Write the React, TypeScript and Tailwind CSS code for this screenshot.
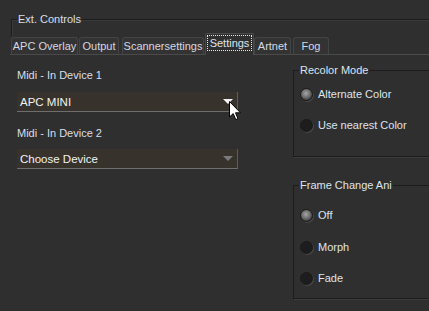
import type { ReactNode } from 'react';

const tabs = [
  { label: 'APC Overlay', cls: 'w-[67px]' },
  { label: 'Output', cls: 'ml-[1px] w-[40px]' },
  { label: 'Scannersettings', cls: 'ml-[3px] w-[82px]' },
  { label: 'Settings', cls: 'ml-[1px] w-[49px]', active: true },
  { label: 'Artnet', cls: 'w-[37px]' },
  { label: 'Fog', cls: 'ml-[2px] w-[36px]' },
];

function Tab({ label, cls, active }: { label: string; cls: string; active?: boolean }) {
  if (active) {
    return (
      <div
        className={`${cls} relative z-10 mb-[-1px] flex h-[22px] shrink-0 items-start justify-center rounded-t-[2px] border border-b-0 border-[#4a4a4a] bg-[#2f2f2f] pt-[1px]`}
      >
        <span className="border border-dotted border-[#e8e8e8] px-[2px] leading-[14px] text-[#dfe4ea]">
          {label}
        </span>
      </div>
    );
  }
  return (
    <div
      className={`${cls} flex h-[17px] shrink-0 items-center justify-center rounded-t-[3px] border border-b-0 border-[#444] bg-[#333] leading-[14px] text-[#d3d9e2]`}
    >
      {label}
    </div>
  );
}

function Dropdown({ value, hot }: { value: string; hot?: boolean }) {
  return (
    <div className="flex h-[20px] w-[221px] items-center justify-between border-r border-b border-r-[#5c5c5c] border-b-[#6e6e6e] bg-[#37322b] pl-[3px] pr-[4px]">
      <span className="text-[11.5px] leading-[14px] text-[#f2f2f2]">{value}</span>
      <svg width="10" height="5" viewBox="0 0 10 5">
        <polygon points="0,0 10,0 5,5" fill={hot ? '#f4f4f4' : '#7a7a7a'} />
      </svg>
    </div>
  );
}

function Radio({ label, checked }: { label: string; checked?: boolean }) {
  return (
    <div className="flex h-[20px] items-center">
      <div
        className={
          checked
            ? 'ml-[6px] size-[13px] rounded-full border border-[#1b1b1b] bg-[radial-gradient(circle_at_45%_40%,#a6a6a6_0%,#6e6e6e_45%,#3e3e3e_75%)] shadow-[1px_1px_0_#484848]'
            : 'ml-[6px] size-[13px] rounded-full border border-[#1a1a1a] bg-[#1d1d1d] shadow-[1px_1px_0_#454545]'
        }
      />
      <span className="ml-[5px] leading-[14px] text-[#dde4ee]">{label}</span>
    </div>
  );
}

function Group({ title, className, children }: { title: string; className: string; children: ReactNode }) {
  return (
    <fieldset className={`${className} w-[160px] border border-[#1c1c1c] shadow-[1px_1px_0_#3c3c3c]`}>
      <legend className="ml-[5px] px-[1px] leading-[14px] text-[#dde4ee]">{title}</legend>
      {children}
    </fieldset>
  );
}

export default function App() {
  return (
    <div
      className="relative h-[311px] w-[429px] overflow-hidden bg-[#2f2f2f] text-[11px]"
      style={{ fontFamily: '"Liberation Sans", Arial, sans-serif' }}
    >
      <fieldset className="ml-[11px] mt-[12px] h-[24px] w-[440px] border-t border-l border-[#1c1c1c] shadow-[inset_1px_1px_0_#3a3a3a]">
        <legend className="ml-[5px] px-[1px] leading-[14px] text-[#d8dfe9]">Ext. Controls</legend>
      </fieldset>

      <div className="ml-[10px] flex h-[19px] items-end border-b border-[#4a4a4a] pl-[1px]">
        {tabs.map((t) => (
          <Tab key={t.label} {...t} />
        ))}
      </div>

      <div className="flex">
        <div className="ml-[17px] flex w-[221px] shrink-0 flex-col">
          <div className="mt-[13px] leading-[14px] text-[#d8dfe9]">Midi - In Device 1</div>
          <div className="mt-[10px]">
            <Dropdown value="APC MINI" hot />
          </div>
          <div className="mt-[14px] leading-[14px] text-[#d8dfe9]">Midi - In Device 2</div>
          <div className="mt-[9px]">
            <Dropdown value="Choose Device" />
          </div>
        </div>

        <div className="ml-[55px] flex shrink-0 flex-col">
          <Group title="Recolor Mode" className="mt-[8px] h-[94px]">
            <div className="mt-[7px]">
              <Radio label="Alternate Color" checked />
            </div>
            <div className="mt-[11px]">
              <Radio label="Use nearest Color" />
            </div>
          </Group>
          <Group title="Frame Change Ani" className="mt-[21px] h-[121px]">
            <div className="mt-[13px]">
              <Radio label="Off" checked />
            </div>
            <div className="mt-[12px]">
              <Radio label="Morph" />
            </div>
            <div className="mt-[11px]">
              <Radio label="Fade" />
            </div>
          </Group>
        </div>
      </div>

      <svg className="absolute left-[229px] top-[101px]" width="13" height="20" viewBox="0 0 13 20">
        <path
          d="M0.5 0.5 L0.5 16 L4.2 12.6 L6.8 18.6 L9 17.7 L6.5 11.8 L11.5 11.8 Z"
          fill="#ffffff"
          stroke="#000000"
          strokeWidth="1"
          strokeLinejoin="miter"
        />
      </svg>
    </div>
  );
}
